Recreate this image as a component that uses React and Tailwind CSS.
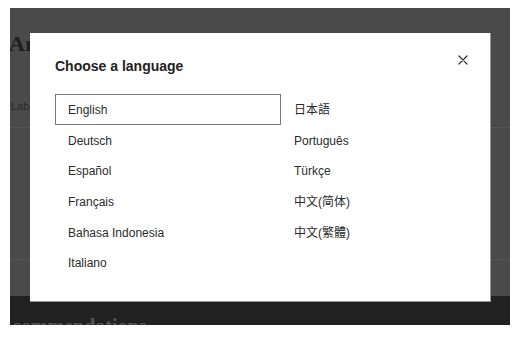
import React from "react";

const left = ["English", "Deutsch", "Español", "Français", "Bahasa Indonesia", "Italiano"];
const right = ["日本語", "Português", "Türkçe", "中文(简体)", "中文(繁體)"];

function Item({ label, selected }) {
  return (
    <div
      className={
        "h-[30.6px] flex items-center px-[12px] pt-[2px] border " +
        (selected ? "border-[#7a7a7a]" : "border-transparent")
      }
    >
      <span className="text-[12px] text-[#2b2b2b]">{label}</span>
    </div>
  );
}

export default function App() {
  return (
    <div
      className="w-[521px] h-[337px] bg-white pt-[8px] pl-[10px]"
      style={{ fontFamily: '"Liberation Sans", "Noto Sans CJK SC", "Noto Sans CJK JP", sans-serif' }}
    >
      <div className="relative w-[500px] h-[317px] bg-[#4a4a4a] overflow-hidden flex flex-col">
        {/* dimmed page behind */}
        <div className="pt-[23px] -ml-[1px]">
          <div
            className="text-[22px] leading-[26px] font-bold text-[#1e1e1e]"
            style={{ fontFamily: '"Liberation Serif", serif' }}
          >
            Ar
          </div>
        </div>
        <div className="mt-[42px] pl-[1px] text-[11px] leading-[14px] text-[#2a2a2a]">Lab</div>
        <div className="mt-[14px] h-px bg-[#555555]" />
        <div className="h-[131px]" />
        <div className="h-px bg-[#555555]" />
        <div className="flex-1" />
        <div className="h-[29px] bg-[#212121] overflow-hidden">
          <div
            className="pt-[18px] pl-[2px] text-[20px] leading-[24px] font-bold text-[#555555]"
            style={{ fontFamily: '"Liberation Serif", serif' }}
          >
            commendations
          </div>
        </div>

        {/* modal */}
        <div className="absolute left-[20px] top-[25px] w-[461px] h-[269px] bg-white border-r border-b border-[#9a9a9a] pl-[25px] pt-[23px]">
          <div className="flex items-center justify-between pr-[22px]">
            <h2 className="text-[14px] leading-[20px] font-bold text-[#222222]">Choose a language</h2>
            <svg width="10" height="10" viewBox="0 0 10 10" className="-mt-[12px]">
              <path d="M1 1 L9 9 M9 1 L1 9" stroke="#333" strokeWidth="1.3" strokeLinecap="round" />
            </svg>
          </div>
          <div className="mt-[18px] grid grid-cols-[226px_226px]">
            <div className="flex flex-col">
              {left.map((l, i) => (
                <Item key={l} label={l} selected={i === 0} />
              ))}
            </div>
            <div className="flex flex-col">
              {right.map((l) => (
                <Item key={l} label={l} />
              ))}
            </div>
          </div>
        </div>
      </div>
    </div>
  );
}
